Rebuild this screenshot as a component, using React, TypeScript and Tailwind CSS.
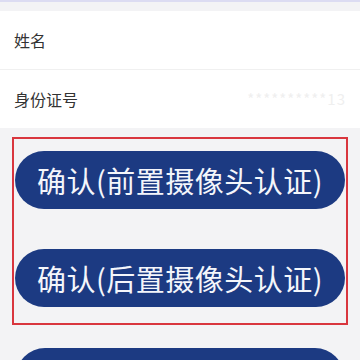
import React from "react";

const font = { fontFamily: '"Noto Sans CJK SC", "Noto Sans", sans-serif' };

function Field({ label, hint }: { label: string; hint?: string }) {
  return (
    <div className="flex h-[58px] items-center justify-between px-[14px]">
      <span className="text-[16px] text-[#333333]">{label}</span>
      {hint && <span className="text-[15px] tracking-[1px] text-[#efefef]">{hint}</span>}
    </div>
  );
}

function ConfirmButton({ label }: { label?: string }) {
  return (
    <button className="flex h-[58px] w-full items-center justify-center rounded-full bg-[#1c3a82] text-[29px] font-normal leading-none tracking-[0.5px] text-[#f4f6fb]">
      {label}
    </button>
  );
}

export default function App() {
  return (
    <div className="h-[360px] w-[360px] overflow-hidden bg-[#f3f3f5]" style={font}>
      <div className="h-[2px] bg-[#dcdcf2]" />
      <div className="mt-[9px] bg-white">
        <Field label="姓名" />
        <div className="h-px bg-[#f0f0f0]" />
        <Field label="身份证号" hint="**********13" />
      </div>
      <div className="mx-[12px] mt-[9px] flex flex-col gap-[40px] border-2 border-[#d9363e] px-[1px] pt-[12px] pb-[16px]">
        <ConfirmButton label="确认(前置摄像头认证)" />
        <ConfirmButton label="确认(后置摄像头认证)" />
      </div>
      <div className="mx-[16px] mt-[23px]">
        <ConfirmButton />
      </div>
    </div>
  );
}
